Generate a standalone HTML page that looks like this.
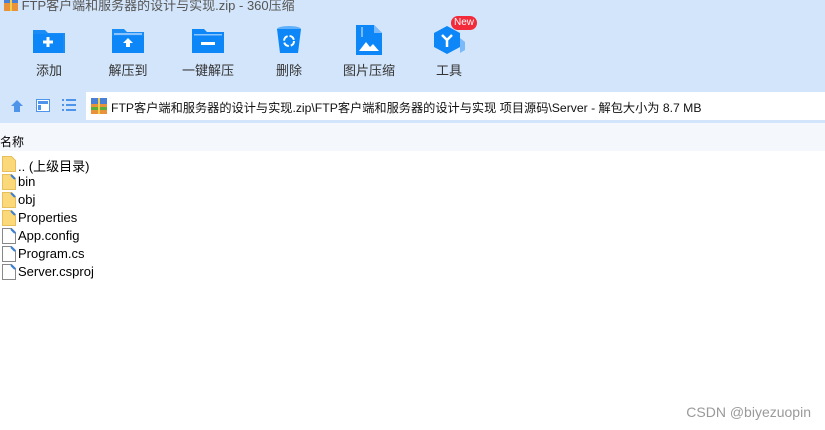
<!DOCTYPE html>
<html><head><meta charset="utf-8"><style>
*{margin:0;padding:0;box-sizing:border-box}
body{width:825px;height:430px;overflow:hidden;background:#fff;font-family:"Liberation Sans","Noto Sans CJK SC",sans-serif;position:relative;font-size:12px;color:#000}
.top{position:absolute;left:0;top:0;width:825px;height:123px;background:#d3e5fa}
.title{position:absolute;left:4px;top:-5px;font-size:13px;color:#555}
.btn{position:absolute;top:24px;width:80px;height:56px;text-align:center}
.btn .ic{position:absolute;left:0;top:0;width:80px;height:32px;display:flex;align-items:center;justify-content:center}
.btn span{position:absolute;left:0;width:80px;top:36px;font-size:13px;color:#333}
.addr{position:absolute;left:86px;top:92px;width:739px;height:28px;background:#fff;}
.addr .t{position:absolute;left:25px;top:6px;font-size:12.2px;color:#111;white-space:nowrap}
.hdr{position:absolute;left:0;top:123px;width:825px;height:28px;background:#f4f8fd}
.hdr span{position:absolute;left:0;top:10px;font-size:12px}
.row{position:absolute;left:2px;height:18px;font-size:13px;white-space:nowrap}
.row svg{position:absolute;left:0;top:1px}
.row span{position:absolute;left:16px;top:1px}
.wm{position:absolute;right:14px;top:404px;color:#999;font-size:14px}
</style></head><body>
<div class="top">
<div class="title"><svg width="14" height="12" style="vertical-align:-1px"><rect x="0" y="2" width="14" height="10" fill="#e8923a"/><rect x="0" y="0" width="14" height="4" fill="#4a7fd8"/><rect x="6" y="0" width="2" height="12" fill="#f3d04b"/></svg> FTP客户端和服务器的设计与实现.zip - 360压缩</div>
<div class="btn" style="left:9px"><div class="ic"><svg width="32" height="26"><path d="M0 3h12l3 3h17v20H0z" fill="#1a8cf5"/><rect x="0" y="7" width="30" height="19" rx="1" fill="#0d86f7"/><path d="M15 10v10M10 15h10" stroke="#fff" stroke-width="3"/></svg></div><span>添加</span></div>
<div class="btn" style="left:88px"><div class="ic"><svg width="32" height="26"><path d="M0 2h12l3 3h17v21H0z" fill="#1a8cf5"/><rect x="0" y="9" width="32" height="17" fill="#0d86f7"/><rect x="2" y="6" width="28" height="2" fill="#8cc4fb"/><path d="M16 11l5 5h-3v4h-4v-4h-3z" fill="#fff"/></svg></div><span>解压到</span></div>
<div class="btn" style="left:168px"><div class="ic"><svg width="32" height="26"><path d="M0 2h12l3 3h17v21H0z" fill="#0d86f7"/><rect x="2" y="7" width="28" height="1.5" fill="#8cc4fb"/><rect x="9" y="15" width="14" height="3" fill="#fff"/></svg></div><span>一键解压</span></div>
<div class="btn" style="left:249px"><div class="ic"><svg width="26" height="30"><ellipse cx="13" cy="4" rx="12" ry="3" fill="#5fb0fb"/><path d="M1 4h24l-3 24H4z" fill="#0d86f7"/><circle cx="13" cy="16" r="5" fill="none" stroke="#fff" stroke-width="2" stroke-dasharray="6 2"/></svg></div><span>删除</span></div>
<div class="btn" style="left:329px"><div class="ic"><svg width="26" height="30"><path d="M0 0h18l8 8v22H0z" fill="#0d86f7"/><path d="M18 0v8h8z" fill="#7ab9fa"/><path d="M3 26l7-9 4 5 3-3 6 7z" fill="#fff"/><rect x="5" y="2" width="2" height="10" fill="#7ab9fa"/></svg></div><span>图片压缩</span></div>
<div class="btn" style="left:409px"><div class="ic"><svg width="34" height="30"><path d="M15 1l13 7v14l-13 7-13-7V8z" fill="#0d86f7"/><path d="M28 13l5 4v8l-5 3z" fill="#7ab9fa"/><path d="M10 10l5 5 5-5M15 15v7" stroke="#fff" stroke-width="2.5" fill="none"/></svg></div><span>工具</span></div>
<div style="position:absolute;left:451px;top:16px;width:26px;height:14px;border-radius:7px;background:#f22a3a;color:#fff;font-size:10px;text-align:center;line-height:14px">New</div>
<svg style="position:absolute;left:9px;top:98px" width="16" height="16"><path d="M8 2l6 6h-3v6H5V8H2z" fill="#4e94ea"/></svg>
<svg style="position:absolute;left:36px;top:99px" width="14" height="13"><rect x="0.5" y="0.5" width="13" height="12" fill="#fff" stroke="#4e94ea"/><rect x="2" y="2" width="10" height="3" fill="#4e94ea"/><rect x="2" y="6" width="3" height="5" fill="#4e94ea"/></svg>
<svg style="position:absolute;left:62px;top:99px" width="14" height="12"><g fill="#4e94ea"><rect x="0" y="0" width="2" height="2"/><rect x="4" y="0" width="10" height="2"/><rect x="0" y="5" width="2" height="2"/><rect x="4" y="5" width="10" height="2"/><rect x="0" y="10" width="2" height="2"/><rect x="4" y="10" width="10" height="2"/></g></svg>
<div class="addr"><svg style="position:absolute;left:5px;top:6px" width="16" height="16"><rect x="0" y="3" width="16" height="13" fill="#e8923a"/><rect x="0" y="0" width="16" height="6" fill="#4a7fd8"/><rect x="0" y="9" width="16" height="3" fill="#5cae3c"/><rect x="7" y="0" width="2" height="16" fill="#f3d04b"/></svg><div class="t">FTP客户端和服务器的设计与实现.zip\FTP客户端和服务器的设计与实现 项目源码\Server - 解包大小为 8.7 MB</div></div>
</div>
<div class="hdr"><span>名称</span></div>
<div class="row" style="top:155px"><svg width="14" height="16"><path d="M0.5 0.5h9l4 4v11h-13z" fill="#fbd97a" stroke="#e7bf5a"/></svg><span>.. (上级目录)</span></div>
<div class="row" style="top:173px"><svg width="14" height="16"><path d="M0.5 0.5h9l4 4v11h-13z" fill="#fbd97a" stroke="#e7bf5a"/><path d="M9 1l4 4" stroke="#3a7fd8" stroke-width="2"/></svg><span>bin</span></div>
<div class="row" style="top:191px"><svg width="14" height="16"><path d="M0.5 0.5h9l4 4v11h-13z" fill="#fbd97a" stroke="#e7bf5a"/><path d="M9 1l4 4" stroke="#3a7fd8" stroke-width="2"/></svg><span>obj</span></div>
<div class="row" style="top:209px"><svg width="14" height="16"><path d="M0.5 0.5h9l4 4v11h-13z" fill="#fbd97a" stroke="#e7bf5a"/><path d="M9 1l4 4" stroke="#3a7fd8" stroke-width="2"/></svg><span>Properties</span></div>
<div class="row" style="top:227px"><svg width="14" height="16"><path d="M0.5 0.5h9l4 4v11h-13z" fill="#fff" stroke="#888"/><path d="M9 1l4 4" stroke="#3a7fd8" stroke-width="2"/></svg><span>App.config</span></div>
<div class="row" style="top:245px"><svg width="14" height="16"><path d="M0.5 0.5h9l4 4v11h-13z" fill="#fff" stroke="#888"/><path d="M9 1l4 4" stroke="#3a7fd8" stroke-width="2"/></svg><span>Program.cs</span></div>
<div class="row" style="top:263px"><svg width="14" height="16"><path d="M0.5 0.5h9l4 4v11h-13z" fill="#fff" stroke="#888"/><path d="M9 1l4 4" stroke="#3a7fd8" stroke-width="2"/></svg><span>Server.csproj</span></div>
<div class="wm">CSDN @biyezuopin</div>
</body></html>
